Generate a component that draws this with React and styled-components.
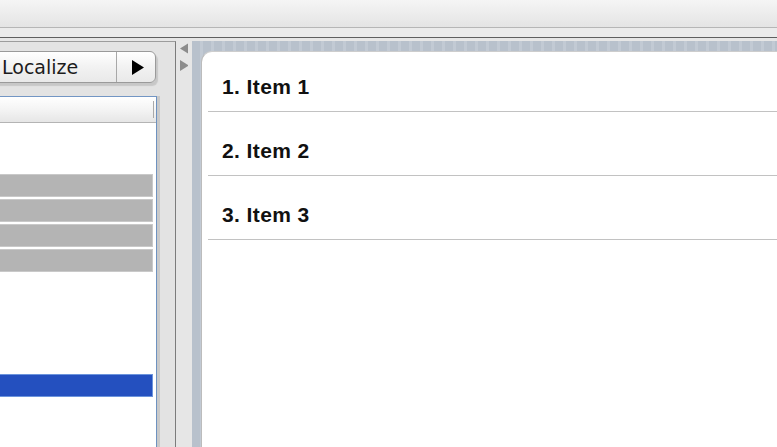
import React from 'react';
import styled, { createGlobalStyle } from 'styled-components';

const GlobalStyle = createGlobalStyle`
    html, body {
        margin: 0;
        padding: 0;
        overflow: hidden;
        background: #e6e6e6;
    }
`;

const Window = styled.div`
    width: 777px;
    height: 447px;
    display: flex;
    flex-direction: column;
    overflow: hidden;
    background: #e6e6e6;
    font-family: "Liberation Sans", Arial, sans-serif;
`;

const TitleBar = styled.div`
    height: 27px;
    flex-shrink: 0;
    background: linear-gradient(#f5f5f5, #e4e4e4);
    border-bottom: 1px solid #b6b6b6;
`;

const Band = styled.div`
    height: 9px;
    flex-shrink: 0;
    background: #ebebeb;
    border-bottom: 1px solid #5f5f5f;
`;

const Main = styled.div`
    flex: 1;
    display: flex;
    min-height: 0;
`;

const LeftPane = styled.div`
    width: 175px;
    margin-top: 3px;
    flex-shrink: 0;
    display: flex;
    flex-direction: column;
    background: #e3e3e3;
    border-top: 1px solid #9c9c9c;
    border-right: 1px solid #7c7c7c;
    overflow: hidden;
`;

const ButtonRow = styled.div`
    padding-top: 9px;
    display: flex;
`;

const SegmentButton = styled.div`
    margin-left: -40px;
    width: 196px;
    height: 32px;
    box-sizing: border-box;
    display: flex;
    border: 1px solid #9a9a9a;
    border-radius: 6px;
    background: linear-gradient(#ffffff, #f2f2f2 50%, #e9e9e9);
    box-shadow: 2px 3px 1px rgba(0, 0, 0, 0.12);
`;

const Segment = styled.div`
    display: flex;
    align-items: center;
    justify-content: ${props => props.icon ? 'center' : 'flex-start'};
    width: ${props => props.icon ? '39px' : 'auto'};
    flex: ${props => props.icon ? '0 0 auto' : '1'};
    padding-left: ${props => props.icon ? '3px' : '41px'};
    box-sizing: border-box;
    font-family: "DejaVu Sans", sans-serif;
    font-size: 19px;
    color: #1c1c1c;
    & + & {
        border-left: 1px solid #a8a8a8;
    }
`;

const ListBox = styled.div`
    margin-top: 13px;
    width: 157px;
    flex: 1;
    box-sizing: border-box;
    background: #ffffff;
    border-top: 1px solid #7396c4;
    border-right: 1px solid #6e92c0;
    box-shadow: 3px 0 0 #c9c9c9;
`;

const ListHeader = styled.div`
    height: 25px;
    display: flex;
    justify-content: flex-end;
    align-items: center;
    padding-right: 2px;
    background: linear-gradient(#ffffff, #f4f4f4 50%, #e6e6e6);
    border-bottom: 1px solid #b4b4b4;

    &::after {
        content: "";
        width: 1px;
        height: 17px;
        background: #a9a9a9;
    }
`;

const ListRow = styled.div`
    height: 25px;
    box-sizing: border-box;
    padding: 1px 3px 1px 0;

    div {
        height: 100%;
        box-sizing: border-box;
        background: ${props => props.selected ? '#2450bf' : props.dim ? '#b4b4b4' : 'transparent'};
        border: 1px solid ${props => props.selected ? '#6c94dc' : props.dim ? '#c9c9c9' : 'transparent'};
        border-left: none;
    }
`;

const Splitter = styled.div`
    width: 16px;
    flex-shrink: 0;
    display: flex;
    flex-direction: column;
    align-items: center;
    padding-top: 5px;
    gap: 6px;
    background: #e6e6e6;
`;

const RightPane = styled.div`
    flex: 1;
    margin-top: 3px;
    display: flex;
    padding: 10px 0 0 9px;
    background: repeating-linear-gradient(90deg, #b8c1cc 0 8px, #c2cad4 8px 11px);
`;

const Card = styled.div`
    flex: 1;
    background: #ffffff;
    border-top: 1px solid #cdcdcd;
    border-left: 1px solid #bcbcbc;
    border-top-left-radius: 11px;
`;

const Item = styled.div`
    height: 64px;
    box-sizing: border-box;
    margin-left: 6px;
    padding: 0 0 12px 14px;
    display: flex;
    align-items: flex-end;
    border-bottom: 1px solid #c2c2c2;
    font-size: 21px;
    line-height: 24px;
    letter-spacing: 0.4px;
    font-weight: bold;
    color: #111111;

    &:first-child {
        height: 60px;
    }
`;

function Arrow({ dir, size, color }) {
    const w = size * 0.8;
    const points = dir === 'left'
        ? `${w},0 ${w},${size} 0,${size / 2}`
        : `0,0 0,${size} ${w},${size / 2}`;
    return (
        <svg width={w} height={size} viewBox={`0 0 ${w} ${size}`}>
            <polygon points={points} fill={color} />
        </svg>
    );
}

const rows = [
    '', '', 'dim', 'dim', 'dim', 'dim', '', '', '', '', 'selected', '', '', ''
];

const items = ['1. Item 1', '2. Item 2', '3. Item 3'];

function App() {
    return (
        <Window>
            <GlobalStyle />
            <TitleBar />
            <Band />
            <Main>
                <LeftPane>
                    <ButtonRow>
                        <SegmentButton>
                            <Segment>Localize</Segment>
                            <Segment icon>
                                <Arrow dir="right" size={15} color="#000" />
                            </Segment>
                        </SegmentButton>
                    </ButtonRow>
                    <ListBox>
                        <ListHeader />
                        {rows.map((state, i) => (
                            <ListRow key={i} dim={state === 'dim'} selected={state === 'selected'}>
                                <div />
                            </ListRow>
                        ))}
                    </ListBox>
                </LeftPane>
                <Splitter>
                    <Arrow dir="left" size={11} color="#8c8c8c" />
                    <Arrow dir="right" size={11} color="#8c8c8c" />
                </Splitter>
                <RightPane>
                    <Card>
                        {items.map(item => (
                            <Item key={item}>{item}</Item>
                        ))}
                    </Card>
                </RightPane>
            </Main>
        </Window>
    );
}

export default App;
